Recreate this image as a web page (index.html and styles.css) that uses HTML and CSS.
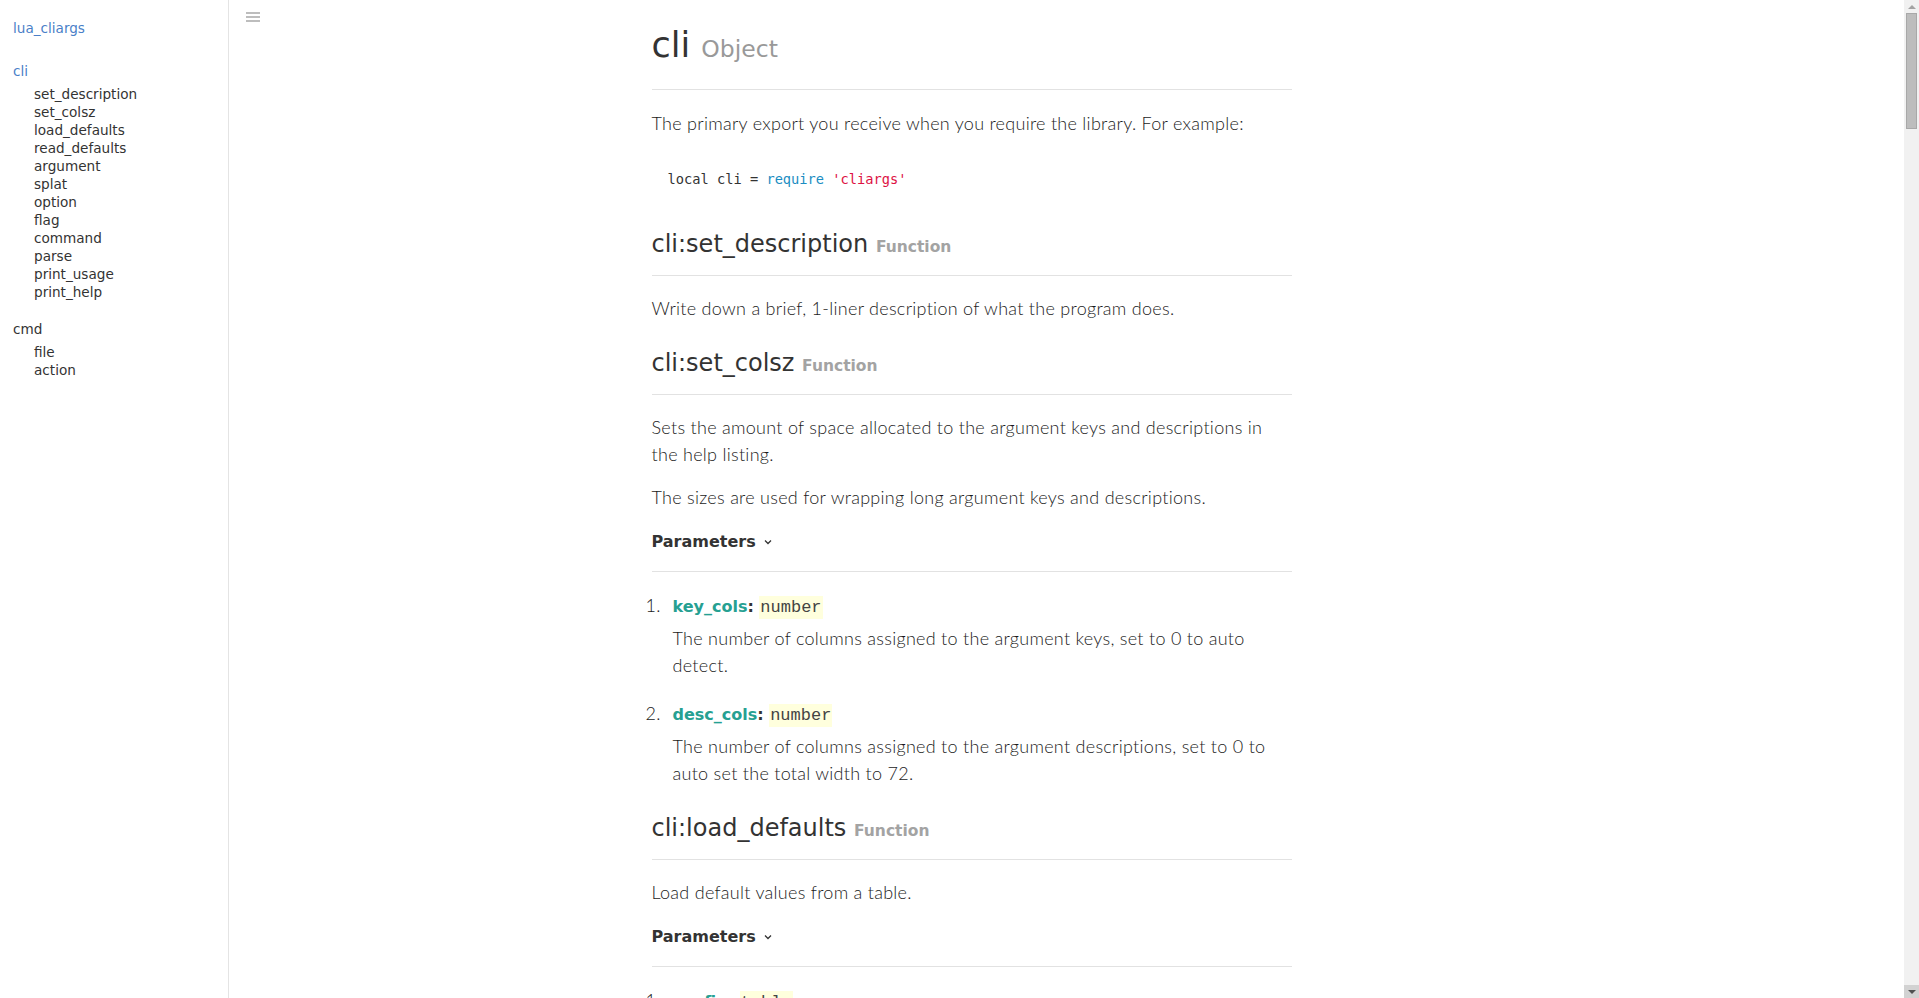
FILE: index.html
```html
<!DOCTYPE html>
<html lang="en">
<head>
<meta charset="utf-8">
<title>lua_cliargs - cli</title>
<link rel="stylesheet" href="styles.css">
</head>
<body>
<div class="page">
  <nav class="sidebar">
    <a class="brand" href="#">lua_cliargs</a>
    <div class="group">
      <a class="group-title active" href="#cli">cli</a>
      <ul class="group-items">
        <li>set_description</li>
        <li>set_colsz</li>
        <li>load_defaults</li>
        <li>read_defaults</li>
        <li>argument</li>
        <li>splat</li>
        <li>option</li>
        <li>flag</li>
        <li>command</li>
        <li>parse</li>
        <li>print_usage</li>
        <li>print_help</li>
      </ul>
    </div>
    <div class="group">
      <a class="group-title" href="#cmd">cmd</a>
      <ul class="group-items">
        <li>file</li>
        <li>action</li>
      </ul>
    </div>
  </nav>

  <main class="main">
    <button class="menu-toggle" aria-label="Toggle sidebar"><span></span><span></span><span></span></button>
    <div class="content">
      <article class="doc">
        <h1 class="title">cli <small>Object</small></h1>
        <p>The primary export you receive when you require the library. For example:</p>
        <pre class="code"><code>local cli = <span class="kw">require</span> <span class="str">'cliargs'</span></code></pre>

        <h2 class="fn">cli:set_description <small>Function</small></h2>
        <p>Write down a brief, 1-liner description of what the program does.</p>

        <h2 class="fn">cli:set_colsz <small>Function</small></h2>
        <p>Sets the amount of space allocated to the argument keys and descriptions in the help listing.</p>
        <p>The sizes are used for wrapping long argument keys and descriptions.</p>
        <h3 class="params">Parameters <span class="chev"><svg width="8" height="6" viewBox="0 0 8 6"><path d="M1 1.5 L4 4.5 L7 1.5" fill="none" stroke="#333" stroke-width="1.3"/></svg></span></h3>
        <ol class="param-list">
          <li>
            <div class="param-head"><span class="pname">key_cols</span><b class="colon">:</b> <code class="ptype">number</code></div>
            <p class="pdesc">The number of columns assigned to the argument keys, set to 0 to auto detect.</p>
          </li>
          <li>
            <div class="param-head"><span class="pname">desc_cols</span><b class="colon">:</b> <code class="ptype">number</code></div>
            <p class="pdesc">The number of columns assigned to the argument descriptions, set to 0 to auto set the total width to 72.</p>
          </li>
        </ol>

        <h2 class="fn">cli:load_defaults <small>Function</small></h2>
        <p>Load default values from a table.</p>
        <h3 class="params">Parameters <span class="chev"><svg width="8" height="6" viewBox="0 0 8 6"><path d="M1 1.5 L4 4.5 L7 1.5" fill="none" stroke="#333" stroke-width="1.3"/></svg></span></h3>
        <ol class="param-list">
          <li>
            <div class="param-head"><span class="pname">config</span><b class="colon">:</b> <code class="ptype">table</code></div>
            <p class="pdesc">Your new set of defaults. The keys could either point to the short or expanded option names.</p>
          </li>
          <li>
            <div class="param-head"><span class="pname">strict</span><b class="colon">:</b> <code class="ptype">boolean</code></div>
            <p class="pdesc">When true, an error will be returned if a key does not match any known option.</p>
          </li>
        </ol>

        <h2 class="fn">cli:read_defaults <small>Function</small></h2>
        <p>Read config values from a configuration file.</p>
        <h3 class="params">Parameters <span class="chev"><svg width="8" height="6" viewBox="0 0 8 6"><path d="M1 1.5 L4 4.5 L7 1.5" fill="none" stroke="#333" stroke-width="1.3"/></svg></span></h3>
        <ol class="param-list">
          <li>
            <div class="param-head"><span class="pname">path</span><b class="colon">:</b> <code class="ptype">string</code></div>
            <p class="pdesc">Absolute file path.</p>
          </li>
          <li>
            <div class="param-head"><span class="pname">format</span><b class="colon">:</b> <code class="ptype">string</code></div>
            <p class="pdesc">The config file format, which has to be one of: "lua", "json", "ini", "yaml".</p>
          </li>
        </ol>

        <h2 class="fn">cli:argument <small>Function</small></h2>
        <p>Defines a required argument.</p>
        <p>Required arguments do not take a symbol like - or -- (would make no sense).</p>

        <h2 class="fn">cli:splat <small>Function</small></h2>
        <p>Defines a "splat" (repetitive) argument.</p>

        <h2 class="fn">cli:option <small>Function</small></h2>
        <p>Defines an optional argument.</p>

        <h2 class="fn">cli:flag <small>Function</small></h2>
        <p>Define a flag argument (on/off).</p>

        <h2 class="fn">cli:command <small>Function</small></h2>
        <p>Define a command argument.</p>

        <h2 class="fn">cli:parse <small>Function</small></h2>
        <p>Parse the process arguments table.</p>

        <h2 class="fn">cli:print_usage <small>Function</small></h2>
        <p>Prints the USAGE message.</p>

        <h2 class="fn">cli:print_help <small>Function</small></h2>
        <p>Prints the HELP information.</p>

        <h1 class="title" id="cmd">cmd <small>Object</small></h1>
        <h2 class="fn">cmd:file <small>Function</small></h2>
        <p>Specify a file that the command should run.</p>
        <h2 class="fn">cmd:action <small>Function</small></h2>
        <p>Define a command handler.</p>
      </article>
    </div>
  </main>
</div>
<div class="scrollbar" aria-hidden="true">
  <span class="sb-btn sb-up"><i></i></span>
  <span class="sb-thumb"></span>
  <span class="sb-track"></span>
  <span class="sb-btn sb-down"><i></i></span>
</div>
</body>
</html>
```

FILE: styles.css
```css
html, body {
  margin: 0;
  padding: 0;
  background: #fff;
}

body {
  font-family: "Lato", "Roboto", sans-serif;
  color: #333;
}

.page {
  display: flex;
  align-items: flex-start;
  min-height: 8330px;
  margin-right: 15px;
}

/* Sidebar */
.sidebar {
  position: sticky;
  top: 0;
  flex: 0 0 229px;
  height: 100vh;
  box-sizing: border-box;
  border-right: 1px solid #e4e4e4;
  padding: 19px 0 0 13px;
  font-family: "DejaVu Sans", sans-serif;
  font-size: 13.6px;
  line-height: 18px;
}

.sidebar a {
  text-decoration: none;
  color: #333;
}

.brand {
  display: block;
  color: #4a7fc8 !important;
  margin-bottom: 25px;
}

.group {
  margin-bottom: 19px;
}

.group-title {
  display: block;
}

.group-title.active {
  color: #4a7fc8 !important;
}

.group-items {
  list-style: none;
  margin: 5px 0 0;
  padding: 0 0 0 21px;
  color: #333;
}

/* Main */
.main {
  position: relative;
  flex: 1 1 auto;
  min-width: 0;
}

.menu-toggle {
  position: absolute;
  left: 17px;
  top: 12px;
  width: 14px;
  height: 10px;
  padding: 0;
  border: 0;
  background: transparent;
  display: flex;
  flex-direction: column;
  justify-content: space-between;
  cursor: pointer;
}

.menu-toggle span {
  display: block;
  height: 2px;
  background: #bdbdbd;
}

.content {
  max-width: 830px;
  margin: 0 auto;
  padding-top: 23px;
}

.doc {
  max-width: 640px;
  font-size: 18px;
  font-weight: 300;
  line-height: 27px;
  letter-spacing: 0.28px;
  color: #1c1c1c;
}

.doc p {
  margin: 16px 0;
}

.title {
  margin: 0 0 20px;
  padding-bottom: 18px;
  border-bottom: 1px solid #e2e2e2;
  font-family: "DejaVu Sans", sans-serif;
  font-weight: normal;
  font-size: 35px;
  line-height: 44px;
  letter-spacing: 0;
  color: #333;
}

.title small {
  font-size: 23.5px;
  color: #999;
}

#cmd {
  margin-top: 48px;
}

.code {
  margin: 16px 0;
  padding: 16px 16px 14px;
  font-family: "DejaVu Sans Mono", monospace;
  font-size: 13.7px;
  font-weight: normal;
  line-height: 20px;
  letter-spacing: 0;
  color: #333;
}

.code .kw { color: #1a8dc2; }
.code .str { color: #dd1144; }

.fn {
  margin: 25px 0 19px;
  padding-bottom: 12px;
  border-bottom: 1px solid #e2e2e2;
  font-family: "DejaVu Sans", sans-serif;
  font-weight: normal;
  font-size: 24px;
  line-height: 32px;
  letter-spacing: 0;
  color: #333;
}

.fn small {
  font-size: 15.5px;
  font-weight: bold;
  color: #a3a3a3;
}

.params {
  margin: 17px 0 20px;
  padding-bottom: 17px;
  border-bottom: 1px solid #e2e2e2;
  font-family: "DejaVu Sans", sans-serif;
  font-weight: bold;
  font-size: 16px;
  line-height: 24px;
  letter-spacing: 0;
  color: #333;
}

.chev {
  display: inline-block;
  margin-left: 3px;
  vertical-align: 2px;
}

.param-list {
  counter-reset: param;
  list-style: none;
  margin: 20px 0 24px;
  padding: 0;
}

.param-list li {
  counter-increment: param;
  display: grid;
  grid-template-columns: 27px 1fr;
  margin: 0 0 21px -6px;
}

.param-list li::before {
  content: counter(param) ".";
  grid-column: 1;
  grid-row: 1;
}

.param-head,
.doc .pdesc {
  grid-column: 2;
}

.param-head {
  font-size: 18px;
  line-height: 27px;
}

.pname {
  font-family: "DejaVu Sans", sans-serif;
  font-weight: bold;
  font-size: 16px;
  letter-spacing: 0;
  color: #26a092;
}

.colon {
  font-family: "DejaVu Sans", sans-serif;
  font-size: 16px;
  font-weight: bold;
  color: #333;
}

.ptype {
  font-family: "Liberation Mono", monospace;
  font-size: 17px;
  font-weight: normal;
  letter-spacing: 0;
  color: #444;
  background: #ffffdd;
  padding: 2px 1px;
}

.doc .pdesc {
  margin: 4px 0 0;
}

/* Browser-style scrollbar drawn along the right edge */
.scrollbar {
  position: fixed;
  top: 0;
  right: 0;
  width: 15px;
  height: 100vh;
  background: #f1f1f1;
  display: flex;
  flex-direction: column;
  align-items: center;
}

.sb-btn {
  flex: 0 0 13px;
  align-self: stretch;
  display: flex;
  align-items: center;
  justify-content: center;
}

.sb-up i {
  width: 0;
  height: 0;
  border-left: 4px solid transparent;
  border-right: 4px solid transparent;
  border-bottom: 4px solid #a3a3a3;
}

.sb-down {
  background: #d2d2d2;
}

.sb-down i {
  width: 0;
  height: 0;
  border-left: 4px solid transparent;
  border-right: 4px solid transparent;
  border-top: 4px solid #505050;
}

.sb-thumb {
  flex: 0 0 114px;
  width: 9px;
  background: #bdbdbd;
  border: 1px solid #a8a8a8;
}

.sb-track {
  flex: 1 1 auto;
}
```
